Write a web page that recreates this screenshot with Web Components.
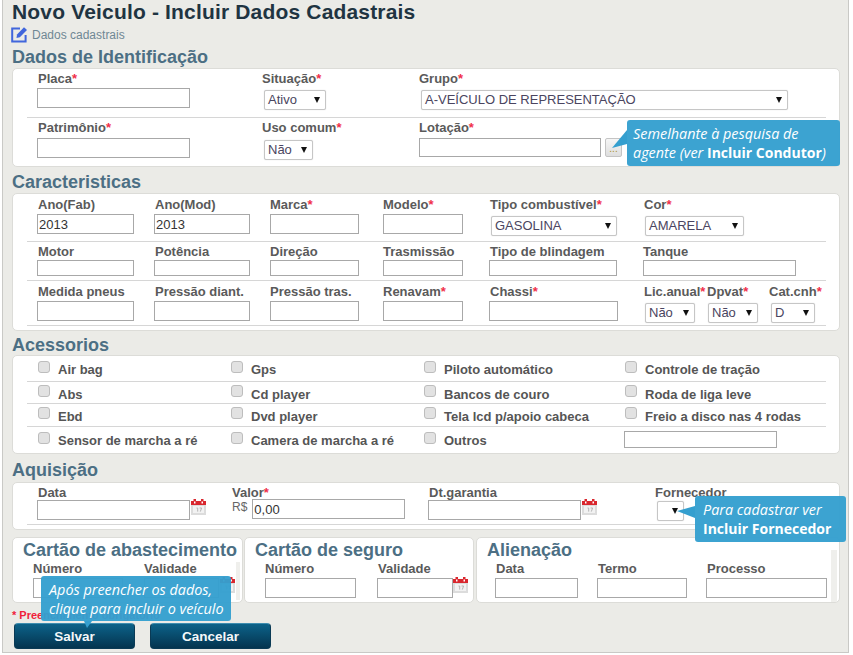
<!DOCTYPE html>
<html lang="pt">
<head>
<meta charset="utf-8">
<title>Novo Veiculo</title>
<style>
  html, body { margin: 0; padding: 0; background: #fff; }
  body { font-family: "Liberation Sans", Arial, sans-serif; }
</style>
</head>
<body>
<vs-app>
  <vs-title slot="top" text="Novo Veiculo - Incluir Dados Cadastrais" sub="Dados cadastrais"></vs-title>

  <vs-heading>Dados de Identificação</vs-heading>
  <vs-card style="height:99px">
    <vs-row line style="--cols:224px 157px 1fr;--h:49px;--pl:10px;--pt:2px;--lg:3px;--lm:1px">
      <vs-field label="Placa" req><vs-input style="width:153px"></vs-input></vs-field>
      <vs-field label="Situação" req><vs-select value="Ativo" style="width:62px;margin:2px 0 0 3px"></vs-select></vs-field>
      <vs-field label="Grupo" req><vs-select value="A-VEÍCULO DE REPRESENTAÇÃO" style="width:367px;margin:2px 0 0 3px"></vs-select></vs-field>
    </vs-row>
    <vs-row style="--cols:224px 157px 1fr;--h:48px;--pl:10px;--pt:2px;--lg:4px;--lm:1px">
      <vs-field label="Patrimônio" req><vs-input style="width:153px"></vs-input></vs-field>
      <vs-field label="Uso comum" req><vs-select value="Não" style="width:49px;margin:2px 0 0 3px"></vs-select></vs-field>
      <vs-field label="Lotação" req>
        <vs-inline style="--g:4px;margin-left:1px"><vs-input style="width:182px;height:19px"></vs-input><vs-dots></vs-dots></vs-inline>
      </vs-field>
    </vs-row>
  </vs-card>

  <vs-heading style="margin-top:4px">Caracteristicas</vs-heading>
  <vs-card style="height:138px">
    <vs-row line style="--cols:117px 115px 113px 107px 154px 1fr;--h:48px;--pl:11px;--pt:3px;--lg:3px">
      <vs-field label="Ano(Fab)"><vs-input value="2013" style="width:97px;margin-left:-1px"></vs-input></vs-field>
      <vs-field label="Ano(Mod)"><vs-input value="2013" style="width:96px;margin-left:-1px"></vs-input></vs-field>
      <vs-field label="Marca" req><vs-input style="width:89px"></vs-input></vs-field>
      <vs-field label="Modelo" req><vs-input style="width:80px"></vs-input></vs-field>
      <vs-field label="Tipo combustível" req><vs-select value="GASOLINA" style="width:126px;margin:2px 0 0 1px"></vs-select></vs-field>
      <vs-field label="Cor" req><vs-select value="AMARELA" style="width:99px;margin:2px 0 0 1px"></vs-select></vs-field>
    </vs-row>
    <vs-row line style="--cols:117px 115px 113px 107px 153px 1fr;--h:39px;--pl:11px;--pt:2px;--lg:2px">
      <vs-field label="Motor"><vs-input style="width:97px;height:16px;margin-left:-1px"></vs-input></vs-field>
      <vs-field label="Potência"><vs-input style="width:96px;height:16px;margin-left:-1px"></vs-input></vs-field>
      <vs-field label="Direção"><vs-input style="width:89px;height:16px"></vs-input></vs-field>
      <vs-field label="Trasmissão"><vs-input style="width:80px;height:16px"></vs-input></vs-field>
      <vs-field label="Tipo de blindagem"><vs-input style="width:128px;height:16px;margin-left:-1px"></vs-input></vs-field>
      <vs-field label="Tanque"><vs-input style="width:153px;height:16px"></vs-input></vs-field>
    </vs-row>
    <vs-row line style="--cols:117px 115px 113px 107px 154px 63px 62px 1fr;--h:45px;--pl:11px;--pt:3px;--lg:3px">
      <vs-field label="Medida pneus"><vs-input style="width:97px;margin-left:-1px"></vs-input></vs-field>
      <vs-field label="Pressão diant."><vs-input style="width:96px;margin-left:-1px"></vs-input></vs-field>
      <vs-field label="Pressão tras."><vs-input style="width:89px"></vs-input></vs-field>
      <vs-field label="Renavam" req><vs-input style="width:80px"></vs-input></vs-field>
      <vs-field label="Chassi" req><vs-input style="width:129px;margin-left:-1px"></vs-input></vs-field>
      <vs-field label="Lic.anual" req><vs-select value="Não" style="width:50px;margin:2px 0 0 1px"></vs-select></vs-field>
      <vs-field label="Dpvat" req><vs-select value="Não" style="width:50px;margin:2px 0 0 1px"></vs-select></vs-field>
      <vs-field label="Cat.cnh" req><vs-select value="D" style="width:44px;margin:2px 0 0 2px"></vs-select></vs-field>
    </vs-row>
  </vs-card>

  <vs-heading style="margin-top:3px;height:21px">Acessorios</vs-heading>
  <vs-card style="height:99px">
    <vs-row line style="--cols:193px 193px 201px 1fr;--h:26px;--pl:11px;--pt:5px;--lo:2px">
      <vs-check>Air bag</vs-check><vs-check>Gps</vs-check><vs-check>Piloto automático</vs-check><vs-check>Controle de tração</vs-check>
    </vs-row>
    <vs-row line style="--cols:193px 193px 201px 1fr;--h:22px;--pl:11px;--pt:3px">
      <vs-check>Abs</vs-check><vs-check>Cd player</vs-check><vs-check>Bancos de couro</vs-check><vs-check>Roda de liga leve</vs-check>
    </vs-row>
    <vs-row line style="--cols:193px 193px 201px 1fr;--h:23px;--pl:11px;--pt:3px">
      <vs-check>Ebd</vs-check><vs-check>Dvd player</vs-check><vs-check>Tela lcd p/apoio cabeca</vs-check><vs-check>Freio a disco nas 4 rodas</vs-check>
    </vs-row>
    <vs-row style="--cols:193px 193px 201px 1fr;--h:26px;--pl:11px;--pt:5px;--lo:2px">
      <vs-check>Sensor de marcha a ré</vs-check><vs-check>Camera de marcha a ré</vs-check><vs-check>Outros</vs-check><vs-input style="width:153px;height:17px;margin:-1px 0 0 -1px"></vs-input>
    </vs-row>
  </vs-card>

  <vs-heading style="margin-top:5px;height:23px">Aquisição</vs-heading>
  <vs-card style="height:48px">
    <vs-row line style="--cols:194px 197px 226px 1fr;--h:42px;--pl:11px;--pt:2px;--lg:1px">
      <vs-field label="Data"><vs-inline style="--g:1px;margin-left:-1px"><vs-input style="width:153px"></vs-input><vs-cal></vs-cal></vs-inline></vs-field>
      <vs-field label="Valor" req>
        <vs-inline style="--g:5px;margin-top:-1px"><vs-text>R$</vs-text><vs-input value="0,00" style="width:153px"></vs-input></vs-inline>
      </vs-field>
      <vs-field label="Dt.garantia"><vs-inline style="--g:1px;margin-left:-1px"><vs-input style="width:153px"></vs-input><vs-cal></vs-cal></vs-inline></vs-field>
      <vs-field label="Fornecedor"><vs-select value="" style="width:27px;margin:1px 0 0 2px"></vs-select></vs-field>
    </vs-row>
  </vs-card>

  <vs-cards style="margin-top:7px">
    <vs-card style="width:231px;height:66px">
      <vs-minihead>Cartão de abastecimento</vs-minihead>
      <vs-row style="--cols:111px 1fr;--h:42px;--pl:6px;--ml:14px;--pt:1px;--lg:2px;--lt:14px">
        <vs-field label="Número"><vs-input style="width:90px"></vs-input></vs-field>
        <vs-field label="Validade"><vs-inline style="--g:1px"><vs-input style="width:75px"></vs-input><vs-cal></vs-cal></vs-inline></vs-field>
      </vs-row>
      <vs-track style="left:223px;top:24px;width:4px;height:38px"></vs-track>
    </vs-card>
    <vs-card style="width:230px;height:66px">
      <vs-minihead>Cartão de seguro</vs-minihead>
      <vs-row style="--cols:113px 1fr;--h:42px;--pl:6px;--ml:14px;--pt:1px;--lg:2px;--lt:14px">
        <vs-field label="Número"><vs-input style="width:91px"></vs-input></vs-field>
        <vs-field label="Validade"><vs-inline style="--g:0;margin-left:-1px"><vs-input style="width:76px"></vs-input><vs-cal></vs-cal></vs-inline></vs-field>
      </vs-row>
    </vs-card>
    <vs-card style="width:364px;height:66px;margin-left:1px">
      <vs-minihead>Alienação</vs-minihead>
      <vs-row style="--cols:102px 109px 1fr;--h:42px;--pl:5px;--ml:14px;--pt:1px;--lg:2px;--lt:14px">
        <vs-field label="Data"><vs-input style="width:83px;margin-left:-1px"></vs-input></vs-field>
        <vs-field label="Termo"><vs-input style="width:90px;margin-left:-1px"></vs-input></vs-field>
        <vs-field label="Processo"><vs-input style="width:121px;margin-left:-1px"></vs-input></vs-field>
      </vs-row>
      <vs-track style="left:354px;top:12px;width:6px;height:52px"></vs-track>
    </vs-card>
  </vs-cards>

  <vs-note>* Preenchimento obrigatório</vs-note>
  <vs-actions>
    <vs-button>Salvar</vs-button>
    <vs-button>Cancelar</vs-button>
  </vs-actions>

  <vs-tip side="left" style="left:624px;top:120px;width:213px;height:46px"><span>Semelhante à pesquisa de</span><br><span>agente (ver <b style="font-style:normal;font-size:14px">Incluir Condutor</b>)</span></vs-tip>
  <vs-tip side="mid" style="left:692px;top:496px;width:151px;height:46px"><span>Para cadastrar ver</span><br><b style="font-style:normal;font-size:14px">Incluir Fornecedor</b></vs-tip>
  <vs-tip side="down" style="left:38px;top:576px;width:190px;height:45px"><span>Após preencher os dados,</span><br><span>clique para incluir o veículo</span></vs-tip>
</vs-app>

<script>
  // small helper, every element below is just a styled shadow root
  const define = (name, css, html) => {
    class El extends HTMLElement {
      constructor() {
        super();
        this.attachShadow({ mode: 'open' });
      }
      connectedCallback() {
        this.shadowRoot.innerHTML = `<style>${css}</style>${typeof html === 'function' ? html(this) : html}`;
      }
    }
    customElements.define(name, El);
  };

  define('vs-app', `
    :host { display: block; position: relative; box-sizing: border-box; width: 847px; height: 653px;
      margin-left: 2px; padding: 0 8px 0 9px; background: #ebebe7;
      border: 1px solid #c9c9c6; border-top: 0; overflow: hidden; font-family: "Liberation Sans", Arial, sans-serif; }
  `, '<slot name="top"></slot><slot></slot>');

  define('vs-title', `
    :host { display: block; }
    h1 { margin: 0; height: 24px; font-size: 21px; line-height: 24px; font-weight: bold; color: #1f3442; letter-spacing: .17px; }
    div { display: flex; align-items: center; gap: 4px; height: 21px; margin: 0 0 1px -1px; font-size: 12px; color: #6f8794; }
    svg { display: block; }
  `, (el) => `
    <h1>${el.getAttribute('text')}</h1>
    <div>
      <svg width="17" height="17" viewBox="0 0 17 17">
        <path d="M14.600 9v6.600H1.200V2.600H9" fill="none" stroke="#4166dc" stroke-width="2"/>
        <path d="M6 8.600 13 1.200l3 2.900-7.200 7.200-3.300.600z" fill="#4166dc"/>
      </svg>
      <span>${el.getAttribute('sub')}</span>
    </div>`);

  define('vs-heading', `
    :host { display: block; height: 22px; font-size: 18px; line-height: 22px; font-weight: bold; color: #4c6f84; }
  `, '<slot></slot>');

  define('vs-minihead', `
    :host { display: block; height: 22px; margin: 1px 0 0 10px; font-size: 18px; line-height: 22px; font-weight: bold; color: #4c6f84; white-space: nowrap; }
  `, '<slot></slot>');

  define('vs-card', `
    :host { display: block; position: relative; box-sizing: border-box; background: #fff; border: 1px solid #dcdcd8; border-radius: 5px; flex: none; }
  `, '<slot></slot>');

  define('vs-cards', `:host { display: flex; gap: 1px; }`, '<slot></slot>');

  define('vs-row', `
    :host { display: grid; grid-template-columns: var(--cols); box-sizing: border-box; height: var(--h);
      margin: 0 var(--ml, 13px) 0 var(--ml, 14px); padding: var(--pt, 0) 0 0 var(--pl, 0); align-content: start; }
    :host([line]) { border-bottom: 1px solid #d6d6d6; }
  `, '<slot></slot>');

  // flex column so the label gap and the margin of the control add up
  define('vs-field', `
    :host { display: flex; flex-direction: column; align-items: flex-start; min-width: 0; }
    label { display: block; height: 14px; margin: 0 0 var(--lg, 3px) var(--lm, 0); font-size: 13px; line-height: var(--lt, 16px);
      font-weight: bold; color: #5a5a5a; white-space: nowrap; }
    i { font-style: normal; color: #f0304a; }
  `, (el) => `<label>${el.getAttribute('label')}${el.hasAttribute('req') ? '<i>*</i>' : ''}</label><slot></slot>`);

  define('vs-inline', `:host { display: flex; align-items: flex-start; gap: var(--g, 4px); }`, '<slot></slot>');

  define('vs-text', `:host { display: block; font-size: 12px; line-height: 14px; color: #666; margin-top: 1px; }`, '<slot></slot>');

  define('vs-input', `
    :host { display: block; height: 20px; flex: none; }
    input { display: block; box-sizing: border-box; width: 100%; height: 100%; margin: 0; padding: 1px 1px 0 1px;
      border: 1px solid #a8a8a8; border-radius: 0; background: #fff; outline: 0;
      font: 13px "Liberation Sans", Arial, sans-serif; color: #333; }
  `, (el) => `<input type="text" value="${el.getAttribute('value') || ''}">`);

  define('vs-select', `
    :host { display: block; box-sizing: border-box; height: 20px; flex: none; position: relative; background: #fff;
      border: 1px solid #c6c6c6; border-radius: 2px; box-shadow: 0 0 1px #ccc; font-size: 13px; line-height: 18px; color: #4a4560; }
    span { display: block; padding-left: 3px; white-space: nowrap; }
    i { position: absolute; right: 5px; top: 6px; width: 0; height: 0; border: 3.500px solid transparent; border-top: 6px solid #111; border-bottom: 0; }
  `, (el) => `<span>${el.getAttribute('value') || ''}</span><i></i>`);

  define('vs-dots', `
    :host { display: block; box-sizing: border-box; width: 17px; height: 19px; flex: none; border: 1px solid #c4c4c4; border-radius: 2px;
      background: linear-gradient(#f6f6f6, #dedede); color: #a89030; font-size: 10px; line-height: 20px; text-align: center; }
  `, '...');

  define('vs-cal', `:host { display: block; width: 15px; height: 16px; flex: none; margin-top: -1px; } svg { display: block; }`, `
    <svg width="15" height="16" viewBox="0 0 15 16">
      <rect x="0" y="3" width="15" height="13" fill="#dcdcdc"/>
      <rect x="2" y="7" width="11" height="7" fill="#f2f2f2"/>
      <path d="M5.500 9h1.200v3.600M8.600 9h2l-1.300 3.600" fill="none" stroke="#b5b5b5"/>
      <rect x="0" y="2" width="15" height="4" fill="#d9272e"/>
      <rect x="2.500" y="0" width="2.500" height="4" fill="#d9272e"/>
      <rect x="10" y="0" width="2.500" height="4" fill="#d9272e"/>
      <rect x="3" y="2.500" width="1.500" height="2" fill="#fff"/>
      <rect x="10.500" y="2.500" width="1.500" height="2" fill="#fff"/>
    </svg>`);

  define('vs-check', `
    :host { display: flex; align-items: flex-start; gap: 8px; font-size: 13px; color: #4d4d4d; white-space: nowrap; }
    i { display: block; box-sizing: border-box; width: 12px; height: 12px; flex: none; background: #e2e2e2; border: 1px solid #bdbdbd; border-radius: 3px; }
    span { display: block; margin-top: var(--lo, 3px); line-height: 14px; font-weight: bold; color: #555; }
  `, '<i></i><span><slot></slot></span>');

  define('vs-track', `:host { display: block; position: absolute; background: #efefec; }`, '');

  define('vs-note', `
    :host { display: block; height: 17px; margin: 3px 0 0 0; font-size: 11px; line-height: 19px; font-weight: bold; color: #f0203a; }
  `, '<slot></slot>');

  define('vs-actions', `:host { display: flex; gap: 15px; margin-left: 2px; }`, '<slot></slot>');

  define('vs-button', `
    :host { display: block; box-sizing: border-box; width: 121px; height: 26px; border-radius: 4px; border: 1px solid #0a3a55;
      border-top-color: #3d8db0; background: linear-gradient(#0c6289, #04344f); color: #f4f8fa;
      font-size: 13.5px; line-height: 25px; font-weight: bold; text-align: center; }
  `, '<slot></slot>');

  define('vs-tip', `
    :host { display: block; position: absolute; z-index: 5; box-sizing: border-box; padding: 5px 0 0 6px;
      background: rgba(52,159,207,.96); border-radius: 3px; color: #fff;
      font: italic 14.4px/18.500px "Open Sans", sans-serif; white-space: nowrap; }
    :host([side="mid"]) { padding-left: 8px; padding-top: 5px; }
    :host([side="down"]) { padding-left: 8px; padding-top: 5px; }
    svg { position: absolute; overflow: visible; left: 0; top: 0; }
  `, (el) => {
    const arrows = {
      left: '-15,28 0,10 0,24',
      mid: '-18,15 0,10 0,22',
      down: '43,45 51,45 46,52'
    };
    return `<svg width="1" height="1"><polygon points="${arrows[el.getAttribute('side')]}" fill="#349fcf"/></svg><slot></slot>`;
  });
</script>
</body>
</html>
